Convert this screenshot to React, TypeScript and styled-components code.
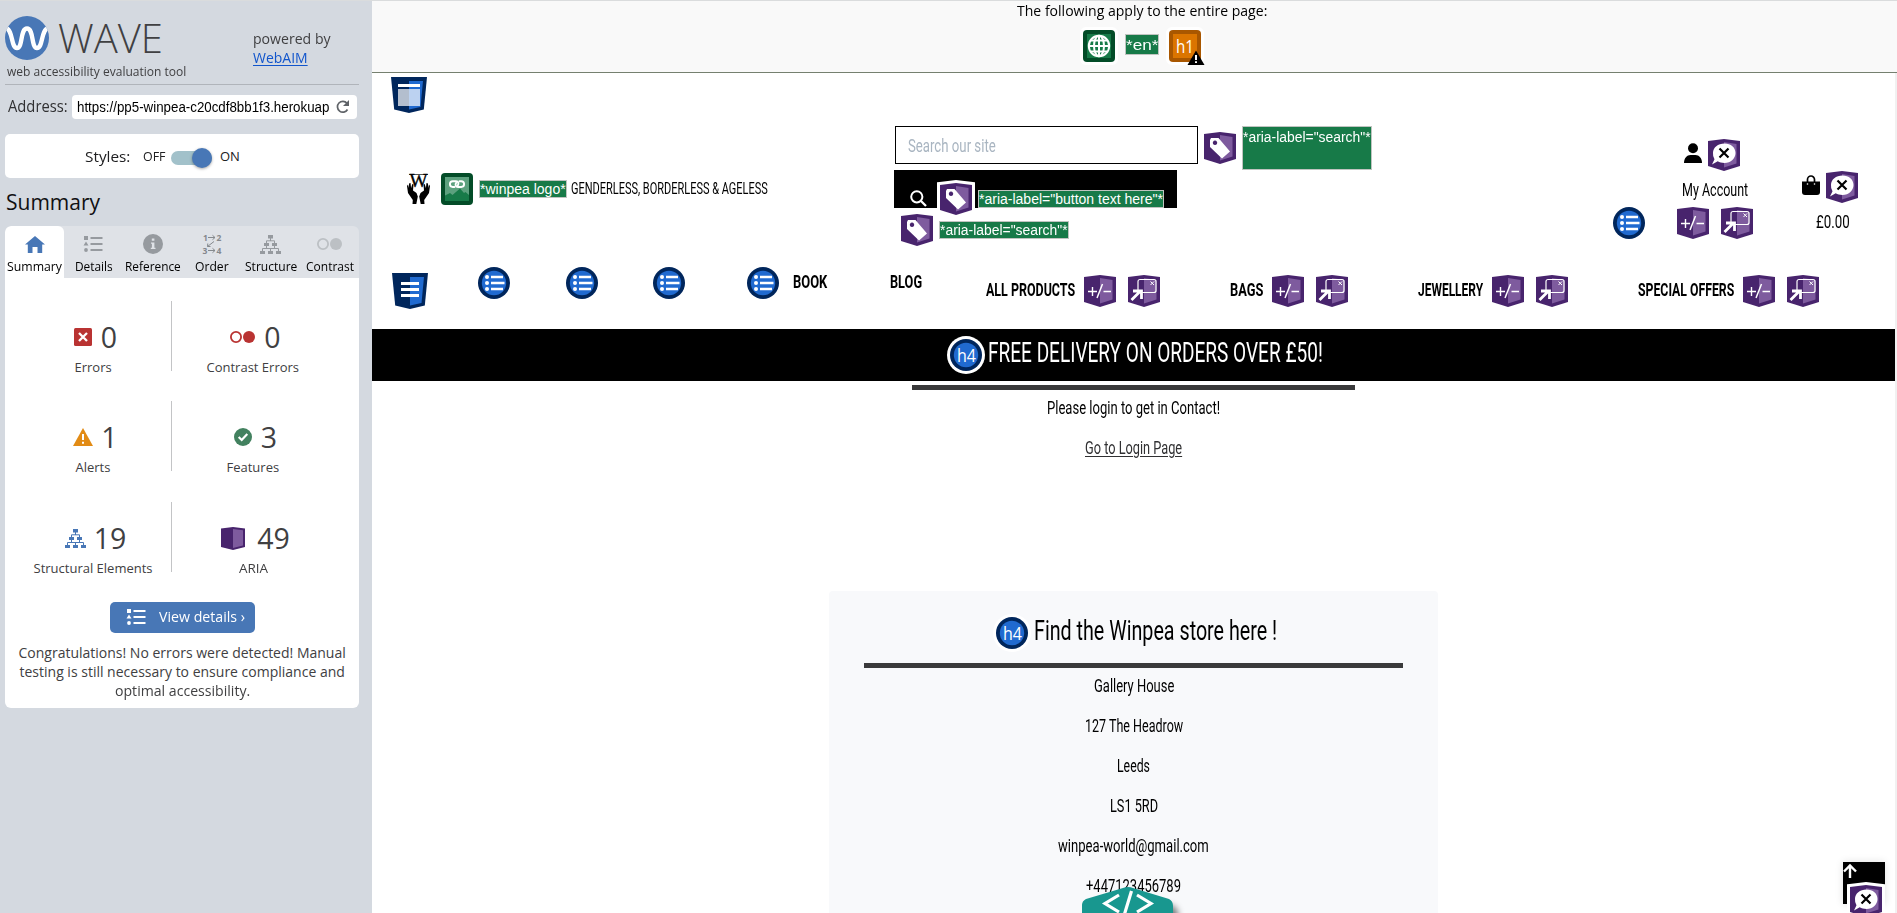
import React, { useLayoutEffect, useRef, useState } from "react";
import styled, { createGlobalStyle } from "styled-components";

const GlobalStyle = createGlobalStyle`
  * { box-sizing: border-box; }
  body { margin: 0; background: #fff; overflow: hidden; font-family: "Open Sans", "Noto Sans", sans-serif; }
  svg { display: block; flex: none; overflow: visible; }
`;

const sans = `"Open Sans", "Noto Sans", sans-serif`;
const arial = `"Liberation Sans", Arial, sans-serif`;
const narrow = `Roboto, "Liberation Sans", sans-serif`;

/* ---------- text set to an exact measure ---------- */

const Measure = styled.span<{ $w: number; $size: number; $lh: number; $color?: string; $weight?: number; $font?: string; $line?: boolean }>`
  display: block;
  flex: none;
  width: ${(p) => p.$w}px;
  height: ${(p) => p.$lh}px;
  line-height: ${(p) => p.$lh}px;
  font-size: ${(p) => p.$size}px;
  font-family: ${(p) => p.$font || narrow};
  font-weight: ${(p) => p.$weight || 400};
  color: ${(p) => p.$color || "#000"};
  > span {
    display: inline-block;
    vertical-align: top;
    white-space: pre;
    transform-origin: 0 0;
    text-decoration: ${(p) => (p.$line ? "underline" : "none")};
    text-underline-offset: 2px;
  }
`;

type FitProps = { w: number; size: number; lh?: number; color?: string; weight?: number; font?: string; line?: boolean; children: string };

function Fit({ w, size, lh = 24, color, weight, font, line, children }: FitProps) {
  const ref = useRef<HTMLSpanElement>(null);
  const [scale, setScale] = useState(1);
  useLayoutEffect(() => {
    if (ref.current) setScale(w / ref.current.offsetWidth);
  }, [w, children]);
  return (
    <Measure $w={w} $size={size} $lh={lh} $color={color} $weight={weight} $font={font} $line={line}>
      <span ref={ref} style={{ transform: `scaleX(${scale})` }}>{children}</span>
    </Measure>
  );
}

/* ---------- icons ---------- */

const AriaBase = ({ children }: { children?: React.ReactNode }) => (
  <svg width="32" height="32" viewBox="0 0 32 32">
    <path d="M0 2 16 0 32 2V27L16 32 0 27Z" fill="#fff" stroke="#fff" strokeWidth="6" />
    <path d="M0 2 16 0 32 2V27L16 32 0 27Z" fill="#48246d" />
    <path d="M16 3 28.5 5V24.5L16 28.5Z" fill="#7e5b9e" />
    {children}
  </svg>
);
const TagIcon = () => (
  <AriaBase>
    <path fillRule="evenodd" d="M7 6h7.5L26 19.5 18 26.5 6 15V8ZM11 8.6a2.2 2.2 0 1 0 .01 0Z" fill="#fff" />
  </AriaBase>
);
const ExpandIcon = () => (
  <AriaBase>
    <path d="M4 16.500h9M8.500 12v9M19.500 16.500h7.500" stroke="#fff" strokeWidth="1.4" />
    <path d="M13 23 18.500 9" stroke="#fff" strokeWidth="1.5" />
  </AriaBase>
);
const PopupIcon = () => (
  <AriaBase>
    <rect x="10" y="4.500" width="18" height="13" rx="2" fill="none" stroke="#fff" strokeWidth="1.2" />
    <path d="m22.500 6.500 3.500 3.500m0-3.500-3.500 3.500" stroke="#fff" strokeWidth="1" />
    <path d="M3.500 25 12 16.500M5 16h8.500v8" fill="none" stroke="#fff" strokeWidth="2.800" />
  </AriaBase>
);
const HiddenIcon = () => (
  <AriaBase>
    <path d="M16.500 4.500C23 4.500 27.500 8.600 27.500 14S23 24 16.500 24c-2.800 0-5-.6-6.800-1.700L4 25.500l2.500-5.300A9.500 9.500 0 0 1 5 14C5 8.600 10 4.500 16.500 4.500Z" fill="#fff" />
    <path d="m11.500 9.500 9 9m0-9-9 9" stroke="#000" strokeWidth="2.200" />
  </AriaBase>
);
const ListIcon = () => (
  <svg width="32" height="32" viewBox="0 0 32 32">
    <circle cx="16" cy="16" r="16" fill="#00265c" />
    <circle cx="16" cy="16" r="12.200" fill="#206ad0" />
    <g fill="#fff">
      <circle cx="9" cy="10" r="2" /><circle cx="9" cy="16" r="2" /><circle cx="9" cy="22" r="2" />
      <path d="M13 8.800h12v2.400H13zM13 14.800h13.500v2.400H13zM13 20.800h12v2.400H13z" />
    </g>
  </svg>
);
const H4Icon = () => (
  <svg width="32" height="32" viewBox="0 0 32 32">
    <circle cx="16" cy="16" r="19" fill="#fff" />
    <circle cx="16" cy="16" r="16" fill="#00265c" />
    <circle cx="16" cy="16" r="12.200" fill="#206ad0" />
    <text x="16.500" y="22.500" textAnchor="middle" fontFamily={sans} fontSize="17.500" fill="#fff" textLength="19" lengthAdjust="spacingAndGlyphs">h4</text>
  </svg>
);
const Shield = ({ children }: { children: React.ReactNode }) => (
  <svg width="36" height="36" viewBox="0 0 36 36">
    <path d="M0 0H36L32.800 32.500 18 36 3.200 32.500Z" fill="#00265c" />
    <path d="M18 4H32L29.500 30 18 32.500Z" fill="#206ad0" />
    {children}
  </svg>
);
const HeaderRegionIcon = () => (
  <Shield>
    <path d="M7 7h22v3H7z" fill="#fff" /><path d="M7 12h22v17H7z" fill="#fff" fillOpacity=".7" />
  </Shield>
);
const NavRegionIcon = () => (
  <Shield><path d="M9 9h18v3H9zM9 15h18v3H9zM9 21h18v3H9z" fill="#fff" /></Shield>
);
const LinkedImageIcon = () => (
  <svg width="32" height="32" viewBox="0 0 32 32">
    <rect width="32" height="32" rx="4" fill="#034c28" />
    <path d="M4 4h24v24H4z" fill="#5ca17e" />
    <path d="m4 22.500 5-2.500 2.500 2L19 15.500l4 4.500 1.500-1L28 22v6H4Z" fill="#177a48" />
    <path d="M13.500 14h-1.700a2.900 2.900 0 0 1 0-5.800H15c2.500 0 3 2.300 1.800 4.200" fill="none" stroke="#fff" strokeWidth="1.900" strokeLinecap="round" />
    <path d="M18.500 8.200h1.700a2.900 2.900 0 0 1 0 5.800H17c-2.500 0-3-2.300-1.800-4.200" fill="none" stroke="#fff" strokeWidth="1.900" strokeLinecap="round" />
  </svg>
);
const GlobeIcon = () => (
  <svg width="32" height="32" viewBox="0 0 32 32">
    <rect x="-3" y="-3" width="38" height="38" rx="6" fill="#fff" />
    <rect width="32" height="32" rx="4" fill="#034c28" />
    <path d="M4 4h24v24H4z" fill="#177a48" />
    <g fill="none" stroke="#fff" strokeWidth="2">
      <circle cx="16" cy="16" r="10.200" /><ellipse cx="16" cy="16" rx="5" ry="10.200" />
      <path d="M16 6v20M6 16h20M8 10.500h16M8 21.500h16" />
    </g>
  </svg>
);
const H1Icon = () => (
  <svg width="32" height="32" viewBox="0 0 32 32">
    <rect x="-3" y="-3" width="38" height="38" rx="6" fill="#fff" />
    <rect width="32" height="32" rx="4" fill="#a95700" />
    <path d="M4 4h24v24H4z" fill="#db7500" />
    <text x="7" y="23" fontFamily={sans} fontSize="18" fill="#fff" textLength="18" lengthAdjust="spacingAndGlyphs">h1</text>
    <path d="m27 20.500 8.500 14.500h-17Z" fill="#000" />
    <path d="M26 25h2v5h-2zM26 31.200h2v1.800h-2z" fill="#fff" />
  </svg>
);
const WinpeaLogo = () => (
  <svg width="23" height="30" viewBox="0 0 23 30">
    <path d="M2 .5h19" stroke="#555" strokeWidth="1" />
    <text x="2.500" y="13" fontFamily={`"Liberation Serif", serif`} fontSize="19" stroke="#000" strokeWidth=".4" textLength="18" lengthAdjust="spacingAndGlyphs">W</text>
    <path d="M0 12 1 10.500 2 14V9.500l1.500-.5.600 5 1.200-4 1.200.5-.5 6 3.500 2.500 1.300 3.500L9.300 30H5.500l.3-4L1 19Z" />
    <path d="M23 12l-1-1.500-1 3.500V9.500L19.500 9l-.6 5-1.200-4-1.200.5.500 6-3.500 2.500-1.300 3.500L13.700 30h3.800l-.3-4L22 19Z" />
  </svg>
);
const UserIcon = () => (
  <svg width="18" height="20" viewBox="0 0 18 20"><circle cx="9" cy="5.200" r="5" /><path d="M0 20c0-5 3-8 6.500-8h5c3.500 0 6.500 3 6.500 8Z" /></svg>
);
const BagIcon = () => (
  <svg width="18" height="20" viewBox="0 0 18 20">
    <path d="M5.500 7V4.500a3.500 3.500 0 0 1 7 0V7" fill="none" stroke="#000" strokeWidth="1.700" />
    <path d="M0 6.500h18V17a3 3 0 0 1-3 3H3a3 3 0 0 1-3-3Z" />
    <circle cx="5.500" cy="9" r=".8" fill="#fff" /><circle cx="12.500" cy="9" r=".8" fill="#fff" />
  </svg>
);
const SearchIcon = () => (
  <svg width="17" height="17" viewBox="0 0 17 17" fill="none" stroke="#fff">
    <circle cx="6.800" cy="6.800" r="5.600" strokeWidth="2" /><path d="m11 11 5 5" strokeWidth="2.300" />
  </svg>
);
const WaveDisk = () => (
  <svg width="44" height="44" viewBox="0 0 44 44">
    <defs><clipPath id="disk"><circle cx="22" cy="22" r="22" /></clipPath></defs>
    <circle cx="22" cy="22" r="22" fill="#4877b6" />
    <path clipPath="url(#disk)" d="M1 12C8 14 6 32 12 32S15 12.500 22 12.500s4 19.500 10 19.500 4-18 11-20" fill="none" stroke="#fff" strokeWidth="4.400" />
  </svg>
);
const ReloadIcon = () => (
  <svg width="14" height="14" viewBox="0 0 14 14"><path d="M11.500 9.500A5.400 5.400 0 1 1 11 3.300" fill="none" stroke="#5f6368" strokeWidth="1.700" /><path d="M13 0v6H7Z" fill="#5f6368" /></svg>
);
const HomeIcon = () => (
  <svg width="20" height="17" viewBox="0 0 20 17"><path d="M10 0 20 8.500h-2.800V17h-4.700v-6H7.500v6H2.800V8.500H0Z" fill="#4877b6" /></svg>
);
const DetailsIcon = ({ color }: { color: string }) => (
  <svg width="19" height="16" viewBox="0 0 19 16" fill={color}>
    <path d="M0 0h4v4H0zM2 5.500l2.500 4h-5zM6.500 1h12v2h-12zM6.500 7h12v2h-12zM6.500 13h12v2h-12z" /><circle cx="2" cy="14" r="1.900" />
  </svg>
);
const InfoIcon = () => (
  <svg width="20" height="20" viewBox="0 0 20 20"><circle cx="10" cy="10" r="10" fill="#969a9f" /><path d="M8.800 4.500h2.600v2.300H8.800zM8 8.500h3.400v5.200h1.100V15H7.800v-1.300h1.100V9.800H8z" fill="#dfe2e7" /></svg>
);
const OrderIcon = () => (
  <svg width="20" height="20" viewBox="0 0 20 20" fontFamily={sans} fontWeight="700" fontSize="8.500" fill="#85898d">
    <text x="1" y="6.500">1</text><text x="14.500" y="6.500">2</text><text x="0.500" y="19.500">3</text><text x="14.500" y="19.500">4</text>
    <path d="M6 3.500h7m-2.500-2.200L13 3.500l-2.500 2.200M6 16.500h7m-2.500-2.200 2.500 2.200-2.500 2.200M12 7.500l-6.500 5m.3-3-.3 3h3" fill="none" stroke="#85898d" />
  </svg>
);
const TreeIcon = ({ color }: { color: string }) => (
  <svg width="21" height="19" viewBox="0 0 21 19">
    <path d="M8 0h5v3.500H8zM4 8h5v3H4zM12 8h5v3h-5zM0 16h5v3H0zM8 16h5v3H8zM16 16h5v3h-5z" fill={color} />
    <path d="M10.500 3v3M6.500 8V5.800h8V8M6.500 11v2.500M14.500 11v2.500M2.500 16v-2.500h16V16M10.500 13.500V16" fill="none" stroke={color} />
  </svg>
);
const ContrastIcon = ({ color }: { color: string }) => (
  <svg width="25" height="12" viewBox="0 0 25 12"><circle cx="6" cy="6" r="5.100" fill="none" stroke={color} strokeWidth="1.800" /><circle cx="19" cy="6" r="6" fill={color} /></svg>
);
const ErrorIcon = () => (
  <svg width="18" height="18" viewBox="0 0 18 18"><rect width="18" height="18" rx="1.500" fill="#b93332" /><path d="m5 5 8 8m0-8-8 8" stroke="#fff" strokeWidth="2.300" /></svg>
);
const AlertIcon = () => (
  <svg width="20" height="18" viewBox="0 0 20 18"><path d="m10 0 10 18H0Z" fill="#e28b15" /><path d="M9 6h2v6H9zM9 13.700h2v2H9z" fill="#fff" /></svg>
);
const CheckIcon = () => (
  <svg width="18" height="18" viewBox="0 0 18 18"><circle cx="9" cy="9" r="9" fill="#42815f" /><path d="m4.700 9 3 3 5.600-6" fill="none" stroke="#fff" strokeWidth="2.200" /></svg>
);
const AriaSmall = () => (
  <svg width="24" height="23" viewBox="0 0 24 23"><path d="M0 1.500 12 0 24 1.500V20L12 23 0 20Z" fill="#48246d" /><path d="M12 2 22 3.200V18.500L12 21Z" fill="#7e5b9e" /></svg>
);

/* ---------- layout ---------- */

const Window = styled.div`
  display: flex;
  width: 1897px;
  height: 913px;
  border-top: 1px solid #dadcdd;
  overflow: hidden;
  position: relative;
`;
const Sidebar = styled.aside`
  width: 372px;
  flex: none;
  padding: 0 13px 0 5px;
  background: #d4d9e0;
`;
const Brand = styled.header`
  display: flex;
  height: 84px;
  border-bottom: 1px solid #b0b4ba;
`;
const BrandLeft = styled.div`padding-top: 15px; width: 248px;`;
const BrandName = styled.div`display: flex; gap: 9px; margin-bottom: 2px;`;
const Tagline = styled.div`padding-left: 2px;`;
const Powered = styled.div`padding-top: 28px;`;
const AddressRow = styled.div`
  display: flex;
  gap: 4px;
  margin-top: 10px;
  padding-left: 3px;
`;
const AddressField = styled.div`
  display: flex;
  align-items: center;
  justify-content: space-between;
  width: 285px;
  height: 24px;
  padding: 0 7px 0 5px;
  border-radius: 4px;
  background: #fff;
`;
const StylesPanel = styled.div`
  display: flex;
  margin-top: 15px;
  height: 44px;
  padding-left: 80px;
  border-radius: 5px;
  background: #fff;
`;
const Toggle = styled.div`
  display: flex;
  justify-content: flex-end;
  align-items: center;
  width: 41px;
  height: 14px;
  margin: 17px 8px 0 5px;
  border-radius: 7px;
  background: #a2c1ca;
`;
const Knob = styled.span`
  width: 20px;
  height: 20px;
  border-radius: 50%;
  background: #4877b6;
  box-shadow: 0 1px 3px rgba(0, 0, 0, 0.35);
`;
const Gap = styled.span<{ $w: number }>`flex: none; width: ${(p) => p.$w}px;`;
const Heading = styled.div`padding-left: 1px;`;
const TabBar = styled.nav`
  display: flex;
  height: 52px;
  border-radius: 6px 6px 0 0;
  background: #dfe2e7;
  overflow: hidden;
`;
const Tab = styled.div<{ $active?: boolean }>`
  display: flex;
  flex-direction: column;
  align-items: center;
  width: 59px;
  border-radius: 6px 6px 0 0;
  background: ${(p) => (p.$active ? "#fff" : "transparent")};
`;
const TabGlyph = styled.span`
  display: flex;
  align-items: center;
  height: 24px;
  margin: 6px 0 3px;
`;
const Panel = styled.section`
  height: 430px;
  padding-top: 23px;
  border-radius: 0 0 6px 6px;
  background: #fff;
`;
const StatRow = styled.div<{ $gap: number }>`
  display: flex;
  height: 70px;
  padding-left: 10px;
  margin-bottom: ${(p) => p.$gap}px;
`;
const StatCell = styled.div<{ $w: number; $divided?: boolean }>`
  display: flex;
  flex-direction: column;
  align-items: center;
  width: ${(p) => p.$w}px;
  padding-top: 16px;
  border-right: ${(p) => (p.$divided ? "1px solid #c3c4c6" : "none")};
`;
const Count = styled.div<{ $gap: number }>`
  display: flex;
  align-items: center;
  gap: ${(p) => p.$gap}px;
  height: 40px;
  margin-bottom: 1px;
  padding-left: 5px;
  font-size: 28.5px;
  line-height: 40px;
  color: #404042;
`;
const DetailsButton = styled.div`
  display: flex;
  align-items: center;
  gap: 13px;
  width: 145px;
  height: 31px;
  margin: 0 auto 10px 105px;
  padding: 0 0 2px 17px;
  border-radius: 5px;
  background: #4877b6;
`;
const Message = styled.div`display: flex; flex-direction: column; align-items: center;`;

const Main = styled.main`
  display: flex;
  flex-direction: column;
  width: 1525px;
  height: 912px;
  overflow: hidden;
`;
const PageBar = styled.div`
  display: flex;
  flex-direction: column;
  align-items: center;
  height: 72px;
  padding-left: 14px;
  background: #f9f9f9;
  border-bottom: 1px solid #75806f;
`;
const PageIcons = styled.div`display: flex; gap: 10px; margin-top: 11px;`;
const Label = styled.span<{ $w: number; $h: number; $mt?: number; $pad?: number }>`
  flex: none;
  width: ${(p) => p.$w}px;
  height: ${(p) => p.$h}px;
  margin-top: ${(p) => p.$mt || 0}px;
  padding-top: ${(p) => p.$pad || 0}px;
  border: 1px solid #c0c4c0;
  background: #177a48;
`;
const Site = styled.div`
  height: 840px;
  background: #fff;
  border-right: 2px solid #f1f1f1;
`;
const SiteHeader = styled.header`display: flex; height: 184px;`;
const LogoColumn = styled.div`width: 522px; padding: 4px 0 0 19px;`;
const LogoRow = styled.div`display: flex; margin: 60px 0 0 16px;`;
const Nudge = styled.div<{ $mt?: number; $ml?: number }>`
  flex: none;
  margin-top: ${(p) => p.$mt || 0}px;
  margin-left: ${(p) => p.$ml || 0}px;
`;
const SearchColumn = styled.div`width: 719px; padding-top: 53px;`;
const SearchRow = styled.div`display: flex; height: 44px; gap: 6px; padding-left: 1px;`;
const SearchInput = styled.div`
  width: 303px;
  height: 38px;
  padding: 7px 0 0 12px;
  border: 1px solid #000;
`;
const SearchButton = styled.div`
  display: flex;
  width: 283px;
  height: 38px;
  padding-left: 16px;
  background: #000;
`;
const ResultRow = styled.div`display: flex; gap: 6px; padding: 6px 0 0 7px;`;
const AccountColumn = styled.div`width: 125px; padding: 66px 0 0 32px;`;
const AccountRow = styled.div`display: flex; gap: 6px; padding: 4px 0 0 7px; margin-top: -4px;`;
const AccountIcons = styled.div`display: flex; gap: 12px; margin-top: 5px;`;
const CartColumn = styled.div`padding-top: 98px;`;
const CartRow = styled.div`display: flex; gap: 6px;`;
const Nav = styled.nav`display: flex; height: 72px; padding-left: 20px;`;
const MenuItem = styled.div<{ $ml: number }>`
  display: flex;
  gap: 12px;
  margin: 18px 0 0 ${(p) => p.$ml}px;
  > :first-child { margin: 3px -3px 0 0; }
`;
const Banner = styled.div`
  display: flex;
  justify-content: center;
  gap: 6px;
  height: 52px;
  padding-left: 6px;
  background: #000;
`;
const Content = styled.section`display: flex; flex-direction: column; align-items: center; padding-top: 4px;`;
const Rule = styled.div<{ $w: number }>`
  flex: none;
  width: ${(p) => p.$w}px;
  height: 5px;
  margin-bottom: 6px;
  background: #3a3a3b;
`;
const Lines = styled.div`display: flex; flex-direction: column; align-items: center; gap: 16px;`;
const Card = styled.div`
  display: flex;
  flex-direction: column;
  align-items: center;
  width: 609px;
  height: 360px;
  margin-top: 131px;
  padding-top: 26px;
  border-radius: 4px;
  background: #f8f9fb;
`;
const CardTitle = styled.div`display: flex; gap: 6px; padding-left: 6px; margin-bottom: 14px;`;
const CodeTab = styled.div`position: absolute; left: 1082px; top: 886px;`;
const BackToTop = styled.div`
  position: absolute;
  left: 1843px;
  top: 861px;
  width: 42px;
  height: 42px;
  padding: 2px 0 0 0;
  background: #000;
  box-shadow: 0 0 8px rgba(0, 0, 0, 0.12);
`;

const TabItem = ({ label, w, active, children }: { label: string; w: number; active?: boolean; children: React.ReactNode }) => (
  <Tab $active={active}><TabGlyph>{children}</TabGlyph><Fit w={w} size={12.5} lh={16} font={sans}>{label}</Fit></Tab>
);
const Stat = ({ icon, count, label, w, gap = 9, divided }: { icon: React.ReactNode; count: number; label: string; w: number; gap?: number; divided?: boolean }) => (
  <StatCell $w={divided ? 157 : 162} $divided={divided}>
    <Count $gap={gap}>{icon}<span>{count}</span></Count>
    <Fit w={w} size={13} lh={18} font={sans} color="#404042">{label}</Fit>
  </StatCell>
);
const Menu = ({ label, w, ml }: { label: string; w: number; ml: number }) => (
  <MenuItem $ml={ml}><Fit w={w} size={17.5} weight={700}>{label}</Fit><ExpandIcon /><PopupIcon /></MenuItem>
);
const AltText = ({ w, h = 18, mt, pad, text, size = 14 }: { w: number; h?: number; mt?: number; pad?: number; text: string; size?: number }) => (
  <Label $w={w} $h={h} $mt={mt} $pad={pad}><Fit w={w - 2} size={size} lh={16} font={arial} color="#fff">{text}</Fit></Label>
);

const addressLines: [string, number][] = [
  ["Gallery House", 80],
  ["127 The Headrow", 98],
  ["Leeds", 33],
  ["LS1 5RD", 48],
  ["winpea-world@gmail.com", 151],
  ["+447123456789", 95],
];

export default function App() {
  return (
    <>
      <GlobalStyle />
      <Window>
        <Sidebar>
          <Brand>
            <BrandLeft>
              <BrandName><WaveDisk /><Fit w={105} size={40} lh={44} weight={300} font={sans} color="#404042">WAVE</Fit></BrandName>
              <Tagline><Fit w={179} size={12.5} lh={20} font={sans} color="#404042">web accessibility evaluation tool</Fit></Tagline>
            </BrandLeft>
            <Powered>
              <Fit w={78} size={15} lh={19} font={sans} color="#404042">powered by</Fit>
              <Fit w={55} size={15} lh={19} font={sans} color="#1155cc" line>WebAIM</Fit>
            </Powered>
          </Brand>
          <AddressRow>
            <Fit w={60} size={15.5} lh={22} font={sans} color="#303032">Address:</Fit>
            <AddressField>
              <Fit w={252} size={14} lh={24} font={arial}>https://pp5-winpea-c20cdf8bb1f3.herokuap</Fit>
              <ReloadIcon />
            </AddressField>
          </AddressRow>
          <StylesPanel>
            <Fit w={45} size={15} lh={44} font={sans} color="#202022">Styles:</Fit>
            <Gap $w={13} />
            <Fit w={23} size={13} lh={44} font={sans} color="#202022">OFF</Fit>
            <Toggle><Knob /></Toggle>
            <Fit w={20} size={13} lh={44} font={sans} color="#202022">ON</Fit>
          </StylesPanel>
          <Heading><Fit w={94} size={21} lh={48} font={sans} color="#101012">Summary</Fit></Heading>
          <TabBar>
            <TabItem label="Summary" w={55} active><HomeIcon /></TabItem>
            <TabItem label="Details" w={38}><DetailsIcon color="#969a9f" /></TabItem>
            <TabItem label="Reference" w={56}><InfoIcon /></TabItem>
            <TabItem label="Order" w={34}><OrderIcon /></TabItem>
            <TabItem label="Structure" w={52}><TreeIcon color="#969a9f" /></TabItem>
            <TabItem label="Contrast" w={48}><ContrastIcon color="#bcc0c4" /></TabItem>
          </TabBar>
          <Panel>
            <StatRow $gap={30}>
              <Stat icon={<ErrorIcon />} count={0} label="Errors" w={37} divided />
              <Stat icon={<ContrastIcon color="#b93332" />} count={0} label="Contrast Errors" w={93} />
            </StatRow>
            <StatRow $gap={31}>
              <Stat icon={<AlertIcon />} count={1} label="Alerts" w={35} gap={8} divided />
              <Stat icon={<CheckIcon />} count={3} label="Features" w={53} />
            </StatRow>
            <StatRow $gap={30}>
              <Stat icon={<TreeIcon color="#4877b6" />} count={19} label="Structural Elements" w={119} gap={8} divided />
              <Stat icon={<AriaSmall />} count={49} label="ARIA" w={29} gap={12} />
            </StatRow>
            <DetailsButton><DetailsIcon color="#fff" /><Fit w={86} size={14} lh={27} font={sans} color="#fff">View details ›</Fit></DetailsButton>
            <Message>
              <Fit w={327} size={14} lh={19} font={sans} color="#404042">Congratulations! No errors were detected! Manual</Fit>
              <Fit w={325} size={14} lh={19} font={sans} color="#404042">testing is still necessary to ensure compliance and</Fit>
              <Fit w={135} size={14} lh={19} font={sans} color="#404042">optimal accessibility.</Fit>
            </Message>
          </Panel>
        </Sidebar>

        <Main>
          <PageBar>
            <Fit w={250} size={15} lh={18} font={sans}>The following apply to the entire page:</Fit>
            <PageIcons>
              <GlobeIcon />
              <AltText w={34} h={21} mt={4} pad={2} text="*en*" size={15} />
              <H1Icon />
            </PageIcons>
          </PageBar>
          <Site>
            <SiteHeader>
              <LogoColumn>
                <HeaderRegionIcon />
                <LogoRow>
                  <Nudge $mt={1}><WinpeaLogo /></Nudge>
                  <Nudge $ml={11}><LinkedImageIcon /></Nudge>
                  <Gap $w={6} />
                  <AltText w={88} mt={7} text="*winpea logo*" />
                  <Nudge $ml={4} $mt={4}><Fit w={197} size={16.5}>GENDERLESS, BORDERLESS &amp; AGELESS</Fit></Nudge>
                </LogoRow>
              </LogoColumn>
              <SearchColumn>
                <SearchRow>
                  <SearchInput><Fit w={88} size={18} color="#a9b5c1">Search our site</Fit></SearchInput>
                  <Nudge $mt={6}><TagIcon /></Nudge>
                  <AltText w={130} h={44} pad={2} text={`*aria-label="search"*`} />
                </SearchRow>
                <SearchButton>
                  <Nudge $mt={20}><SearchIcon /></Nudge>
                  <Nudge $mt={13} $ml={13}><TagIcon /></Nudge>
                  <Gap $w={6} />
                  <AltText w={186} mt={20} text={`*aria-label="button text here"*`} />
                </SearchButton>
                <ResultRow>
                  <TagIcon />
                  <AltText w={130} mt={7} text={`*aria-label="search"*`} />
                </ResultRow>
              </SearchColumn>
              <Nudge $mt={134}><ListIcon /></Nudge>
              <AccountColumn>
                <AccountRow><Nudge $mt={4}><UserIcon /></Nudge><HiddenIcon /></AccountRow>
                <Nudge $ml={5} $mt={7}><Fit w={66} size={18}>My Account</Fit></Nudge>
                <AccountIcons><ExpandIcon /><PopupIcon /></AccountIcons>
              </AccountColumn>
              <Gap $w={32} />
              <CartColumn>
                <CartRow><Nudge $mt={4}><BagIcon /></Nudge><HiddenIcon /></CartRow>
                <Nudge $ml={14} $mt={7}><Fit w={34} size={18}>£0.00</Fit></Nudge>
              </CartColumn>
            </SiteHeader>
            <Nav>
              <Nudge $mt={16}><NavRegionIcon /></Nudge>
              <Nudge $mt={10} $ml={50}><ListIcon /></Nudge>
              <Nudge $mt={10} $ml={56}><ListIcon /></Nudge>
              <Nudge $mt={10} $ml={55}><ListIcon /></Nudge>
              <Nudge $mt={10} $ml={62}><ListIcon /></Nudge>
              <Nudge $mt={13} $ml={14}><Fit w={34} size={17.5} weight={700}>BOOK</Fit></Nudge>
              <Nudge $mt={13} $ml={63}><Fit w={32} size={17.5} weight={700}>BLOG</Fit></Nudge>
              <Menu label="ALL PRODUCTS" w={89} ml={64} />
              <Menu label="BAGS" w={33} ml={70} />
              <Menu label="JEWELLERY" w={65} ml={70} />
              <Menu label="SPECIAL OFFERS" w={96} ml={70} />
            </Nav>
            <Banner>
              <Nudge $mt={10}><H4Icon /></Nudge>
              <Fit w={335} size={27} lh={48} color="#fff">FREE DELIVERY ON ORDERS OVER £50!</Fit>
            </Banner>
            <Content>
              <Rule $w={443} />
              <Lines>
                <Fit w={173} size={17.5}>Please login to get in Contact!</Fit>
                <Fit w={97} size={17.5} color="#303032" line>Go to Login Page</Fit>
              </Lines>
              <Card>
                <CardTitle><H4Icon /><Fit w={243} size={27} lh={28}>Find the Winpea store here !</Fit></CardTitle>
                <Rule $w={539} />
                <Lines>
                  {addressLines.map(([text, w]) => <Fit key={text} w={w} size={17.5}>{text}</Fit>)}
                </Lines>
              </Card>
            </Content>
          </Site>
        </Main>

        <CodeTab>
          <svg width="91" height="40" viewBox="0 0 91 40">
            <defs><filter id="soft" x="-20%" y="-20%" width="150%" height="150%"><feGaussianBlur stdDeviation="3" /></filter></defs>
            <path d="M10 24Q10 20 14 18L50 12 88 18Q96 20 96 27V46H10Z" fill="#000" fillOpacity=".5" filter="url(#soft)" />
            <path d="M0 40V18Q0 14 4 12L41 1Q46-1 51 1L87 12Q91 14 91 19V40Z" fill="#18978f" />
            <path d="M37 8 23 16.500 37 25M55 8l14 8.500L55 25M49.500 4 41 32" fill="none" stroke="#fff" strokeWidth="3.200" />
          </svg>
        </CodeTab>
        <BackToTop>
          <svg width="14" height="14" viewBox="0 0 14 14"><path d="M7 14V1.500M1 7.500l6-6 6 6" fill="none" stroke="#fff" strokeWidth="2.400" /></svg>
          <Nudge $mt={7} $ml={7}><HiddenIcon /></Nudge>
        </BackToTop>
      </Window>
    </>
  );
}
